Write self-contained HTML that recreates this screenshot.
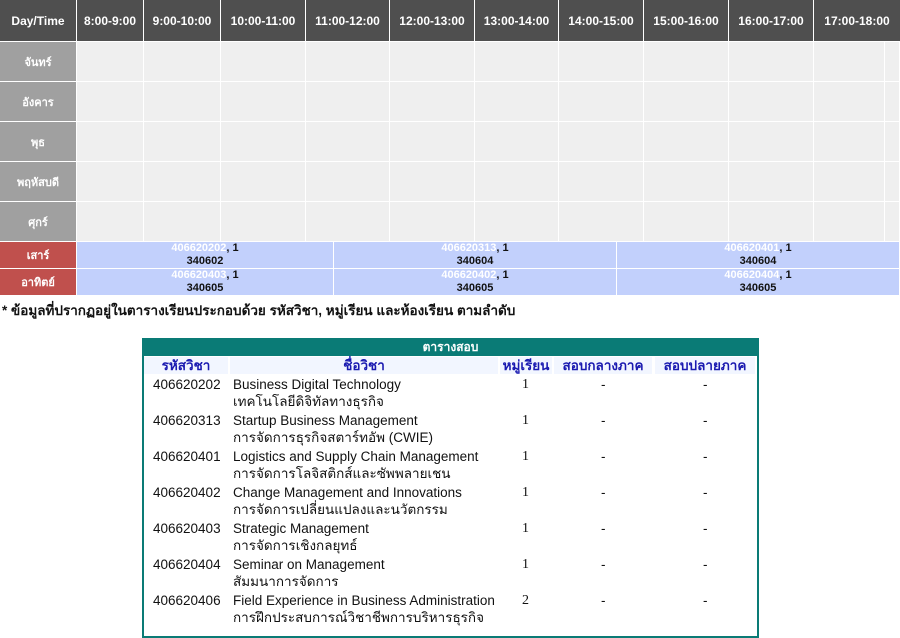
<!DOCTYPE html>
<html><head><meta charset="utf-8"><style>
*{margin:0;padding:0;box-sizing:border-box}
body{width:900px;height:627px;background:#fff;font-family:"Liberation Sans","DejaVu Sans",sans-serif;position:relative;overflow:hidden}
.c{position:absolute;display:flex;align-items:center;justify-content:center;text-align:center;font-weight:bold;font-size:12px}
.h{background:#4f4f4f;color:#fff}
.d{background:#a0a0a0;color:#fff;font-size:11px}
.e{background:#efefef}
.r{background:#c0504d;color:#fff;font-size:11px}
.b{background:#c2d0fc;color:#111;font-size:11px;line-height:13px;flex-direction:column}
.b span{color:#fff}
.t{position:absolute;font-size:13.5px;color:#111;line-height:17px}
.bl{color:#1a1ab0;font-weight:bold;position:absolute;font-size:13.5px;background:#f2f6ff;text-align:center;line-height:17px}
</style></head><body>
<div id="g"></div>
<script>
var xs=[0,77,144,221,306,390,475,559,644,729,814,885,900];
var hd=["Day/Time","8:00-9:00","9:00-10:00","10:00-11:00","11:00-12:00","12:00-13:00","13:00-14:00","14:00-15:00","15:00-16:00","16:00-17:00","17:00-18:00"];
var h="";
for(var i=0;i<11;i++){var w=(i==10?900:xs[i+1]-1)-xs[i];h+='<div class="c h" style="left:'+xs[i]+'px;top:0;width:'+w+'px;height:41px">'+hd[i]+'</div>';}
var days=["จันทร์","อังคาร","พุธ","พฤหัสบดี","ศุกร์"];
for(var r=0;r<5;r++){var y=42+r*40;
h+='<div class="c d" style="left:0;top:'+y+'px;width:76px;height:39px">'+days[r]+'</div>';
for(var i=1;i<12;i++){h+='<div class="c e" style="left:'+xs[i]+'px;top:'+y+'px;width:'+(xs[i+1]-1-xs[i])+'px;height:39px"></div>';}}
var rows=[["เสาร์",242,[["406620202","340602"],["406620313","340604"],["406620401","340604"]]],["อาทิตย์",269,[["406620403","340605"],["406620402","340605"],["406620404","340605"]]]];
var sx=[77,334,617,900];
rows.forEach(function(r){h+='<div class="c r" style="left:0;top:'+r[1]+'px;width:76px;height:26px">'+r[0]+'</div>';
for(var k=0;k<3;k++){h+='<div class="c b" style="left:'+sx[k]+'px;top:'+r[1]+'px;width:'+(sx[k+1]-1-sx[k])+'px;height:26px"><div><span>'+r[2][k][0]+'</span>, 1</div><div>'+r[2][k][1]+'</div></div>';}});
h+='<div class="t" style="left:2px;top:302px;font-weight:bold;font-size:13.5px">* ข้อมูลที่ปรากฏอยู่ในตารางเรียนประกอบด้วย รหัสวิชา, หมู่เรียน และห้องเรียน ตามลำดับ</div>';
h+='<div style="position:absolute;left:142px;top:338px;width:617px;height:300px;border:2px solid #0a7b76;border-top:none"></div>';
h+='<div class="c" style="left:142px;top:338px;width:617px;height:18px;background:#0a7b76;color:#fff;font-size:12px">ตารางสอบ</div>';
h+='<div class="bl" style="left:144px;top:357px;width:84px">รหัสวิชา</div><div class="bl" style="left:230px;top:357px;width:268px">ชื่อวิชา</div><div class="bl" style="left:500px;top:357px;width:52px">หมู่เรียน</div><div class="bl" style="left:554px;top:357px;width:98px">สอบกลางภาค</div><div class="bl" style="left:655px;top:357px;width:100px">สอบปลายภาค</div>';
var ex=[["406620202","Business Digital Technology","เทคโนโลยีดิจิทัลทางธุรกิจ","1"],["406620313","Startup Business Management","การจัดการธุรกิจสตาร์ทอัพ (CWIE)","1"],["406620401","Logistics and Supply Chain Management","การจัดการโลจิสติกส์และซัพพลายเชน","1"],["406620402","Change Management and Innovations","การจัดการเปลี่ยนแปลงและนวัตกรรม","1"],["406620403","Strategic Management","การจัดการเชิงกลยุทธ์","1"],["406620404","Seminar on Management","สัมมนาการจัดการ","1"],["406620406","Field Experience in Business Administration","การฝึกประสบการณ์วิชาชีพการบริหารธุรกิจ","2"]];
ex.forEach(function(e,i){var y=376+i*36;
h+='<div class="t" style="left:153px;top:'+y+'px">'+e[0]+'</div><div class="t" style="left:233px;top:'+y+'px">'+e[1]+'<br>'+e[2]+'</div><div class="t" style="left:522px;top:'+y+'px;font-family:\'Liberation Serif\',serif;font-size:14px">'+e[3]+'</div><div class="t" style="left:601px;top:'+y+'px">-</div><div class="t" style="left:703px;top:'+y+'px">-</div>';});
document.getElementById("g").innerHTML=h;
</script>
</body></html>
